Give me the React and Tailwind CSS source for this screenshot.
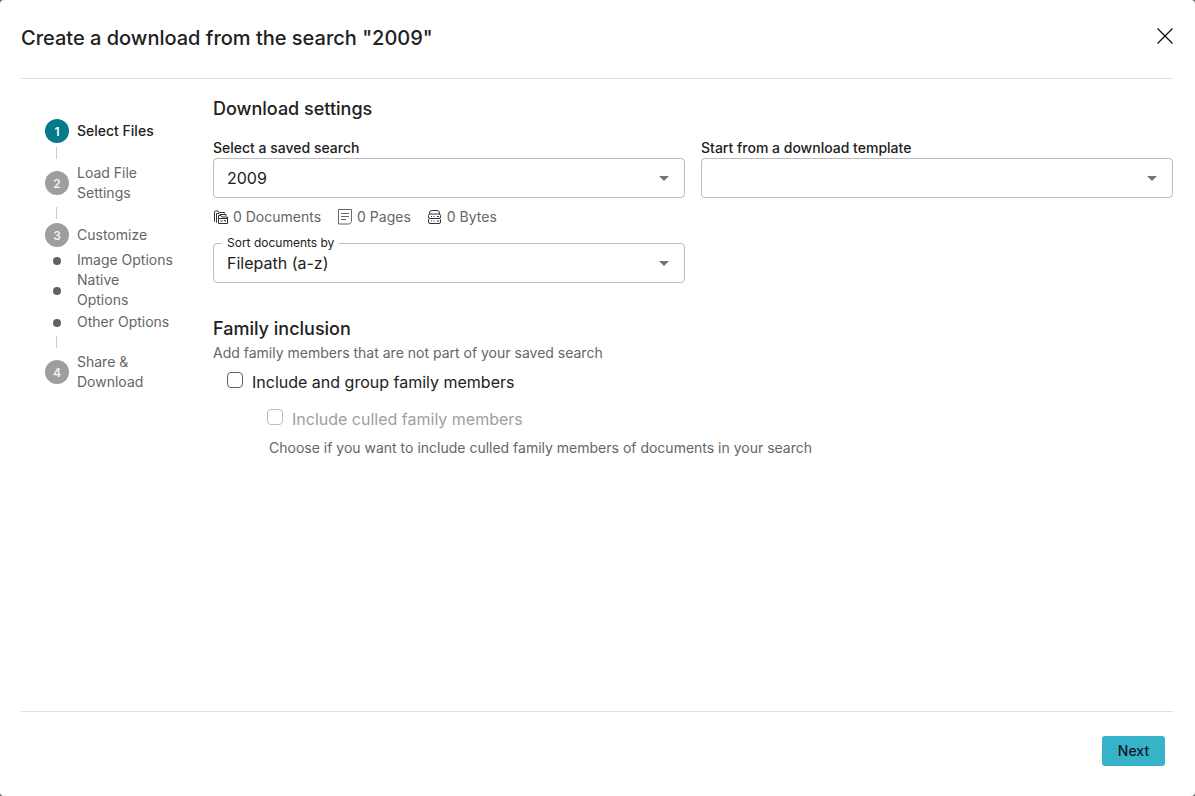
function CloseIcon() {
  return (
    <svg className="h-4 w-4 text-[#111]" viewBox="0 0 16 16" fill="none" stroke="currentColor" strokeWidth="1.3">
      <path d="M0.5 0.5L15.5 15.5M15.5 0.5L0.5 15.5" />
    </svg>
  );
}

function DocumentsIcon() {
  return (
    <svg className="h-4 w-4 text-[#333]" viewBox="0 0 16 16" fill="none" stroke="currentColor" strokeWidth="1" strokeLinejoin="round">
      <path d="M2 12.500h-0.500v-10l1-0.500h2.500l1 1.500h5.500v1" />
      <path d="M4 13.500h-0.500v-9h2.500l1 1h6v1.500" />
      <path d="M5.500 14.500v-8h2.500l1 1.500h5.500v6.500z" />
      <path d="M5.500 9.500h9M7.500 12h2M11 11.500h1.500v1" />
    </svg>
  );
}

function PagesIcon() {
  return (
    <svg className="h-4 w-4 text-[#666]" viewBox="0 0 16 16" fill="none" stroke="currentColor" strokeWidth="1" strokeLinejoin="round">
      <path d="M1.500 0.500h13v12l-2 2.500h-11z" />
      <path d="M4 4.500h8M4 7.500h8M4 10.500h5" />
    </svg>
  );
}

function BytesIcon() {
  return (
    <svg className="h-4 w-4 text-[#333]" viewBox="0 0 16 16" fill="none" stroke="currentColor" strokeWidth="1" strokeLinejoin="round">
      <path d="M2.500 5v-1q0-2.500 2.500-2.500h5q2.500 0 2.500 2.500v1" />
      <rect x="1.500" y="5" width="12" height="4.500" rx="1.500" />
      <path d="M2.500 9.500q-1 0.500-1 1.500v2q0 1.500 1.500 1.500h9q1.500 0 1.500-1.500v-2q0-1-1-1.500" />
      <path d="M4 7.500h1M6.500 7.500h1M10 7.500h2M4 12h1M6.500 12h1M10 12h2" />
    </svg>
  );
}

function StepNumber({ number, active }) {
  return (
    <span
      className={`flex h-6 w-6 shrink-0 items-center justify-center rounded-full pt-px text-xs font-semibold ${
        active ? 'bg-[#07798d] text-white' : 'bg-[#9e9e9e] text-[#f2f2f2]'
      }`}
    >
      {number}
    </span>
  );
}

function Step({ number, label, active }) {
  return (
    <div className="flex items-center gap-2">
      <StepNumber number={number} active={active} />
      <span className={active ? 'font-medium text-[#212121]' : 'text-[#666]'}>{label}</span>
    </div>
  );
}

function SubStep({ label }) {
  return (
    <div className="flex items-center text-[#666]">
      <span className="mt-0.5 mr-4 ml-2 h-2 w-2 shrink-0 rounded-full bg-[#616161]" />
      <span>{label}</span>
    </div>
  );
}

function Connector() {
  return <div className="my-1 ml-[11px] h-3 w-px bg-[#ccc]" />;
}

function SelectBox({ value }) {
  return (
    <div className="flex h-10 items-center justify-between rounded border border-[#bdbdbd] pr-[15px] pl-[13px] text-base text-[#212121]">
      <span>{value}</span>
      <svg className="h-[5px] w-2.5 text-[#757575]" viewBox="0 0 10 5" fill="currentColor">
        <path d="M0 0h10L5 5z" />
      </svg>
    </div>
  );
}

function Stat({ icon, text }) {
  return (
    <span className="flex items-center gap-1">
      {icon}
      {text}
    </span>
  );
}

function App() {
  return (
    <div className="h-screen bg-[#666] font-['Inter',sans-serif]">
      <div className="flex h-full flex-col rounded bg-white pr-[22px] pl-[21px] text-sm leading-5 text-[#212121]">
        <header className="flex h-[79px] shrink-0 items-start justify-between border-b border-[#e0e0e0]">
          <h1 className="mt-6 text-xl leading-7 font-medium">Create a download from the search "2009"</h1>
          <button className="mt-7" aria-label="Close">
            <CloseIcon />
          </button>
        </header>

        <div className="flex flex-1">
          <nav className="w-48 shrink-0 pt-10 pr-[39px] pl-6">
            <Step number="1" label="Select Files" active />
            <Connector />
            <Step number="2" label="Load File Settings" />
            <Connector />
            <Step number="3" label="Customize" />
            <div className="mt-[3px]">
              <SubStep label="Image Options" />
              <SubStep label="Native Options" />
              <div className="mt-0.5">
                <SubStep label="Other Options" />
              </div>
            </div>
            <Connector />
            <Step number="4" label="Share & Download" />
          </nav>

          <main className="flex-1 pt-4">
            <h2 className="text-lg leading-7 font-medium">Download settings</h2>
            <div className="mt-[15px] grid grid-cols-2 gap-x-4">
              <div>
                <label className="block font-medium">Select a saved search</label>
                <SelectBox value="2009" />
                <div className="mt-[9px] flex gap-4 text-[#666]">
                  <Stat icon={<DocumentsIcon />} text="0 Documents" />
                  <Stat icon={<PagesIcon />} text="0 Pages" />
                  <Stat icon={<BytesIcon />} text="0 Bytes" />
                </div>
                <div className="relative mt-4">
                  <span className="absolute -top-2 left-[9px] bg-white px-[5px] text-xs leading-4">Sort documents by</span>
                  <SelectBox value="Filepath (a-z)" />
                </div>
              </div>
              <div>
                <label className="block font-medium">Start from a download template</label>
                <SelectBox value="" />
              </div>
            </div>

            <h2 className="mt-8 text-lg leading-7 font-medium">Family inclusion</h2>
            <p className="text-[#666]">Add family members that are not part of your saved search</p>
            <div className="mt-[9px] ml-3.5 flex gap-[9px] text-base leading-5">
              <span className="h-4 w-4 rounded border border-[#616161]" />
              <span>Include and group family members</span>
            </div>
            <div className="mt-[17px] ml-[54px] flex gap-[9px] text-base leading-5 text-[#9e9e9e]">
              <span className="h-4 w-4 rounded border border-[#bdbdbd]" />
              <span>Include culled family members</span>
            </div>
            <p className="mt-[9px] ml-14 text-[#666]">
              Choose if you want to include culled family members of documents in your search
            </p>
          </main>
        </div>

        <footer className="flex h-[85px] shrink-0 items-start justify-end border-t border-[#e0e0e0] pt-6 pr-2">
          <button className="h-[30px] w-[63px] rounded-[3px] bg-[#36b2c9] font-medium text-[#111827]">Next</button>
        </footer>
      </div>
    </div>
  );
}

export default App;
